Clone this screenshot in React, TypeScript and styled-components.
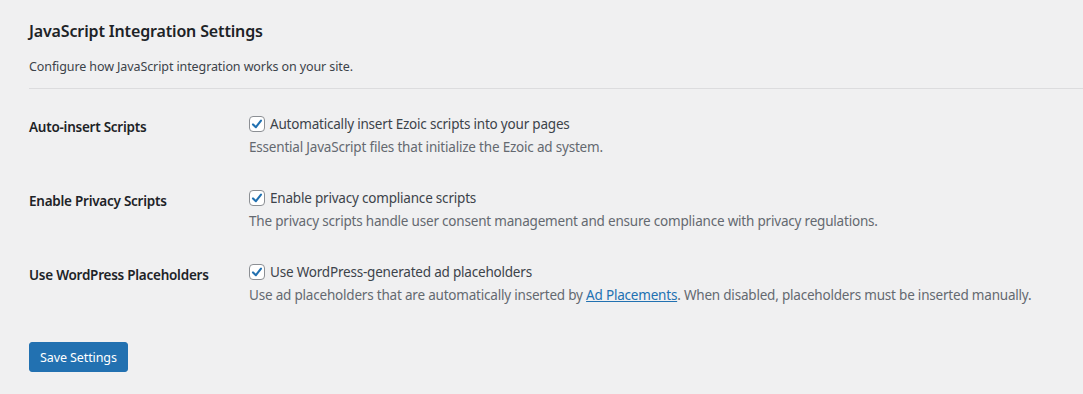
import React from "react";
import styled, { createGlobalStyle } from "styled-components";

const GlobalStyle = createGlobalStyle`
  body {
    margin: 0;
    background: #f0f0f1;
    font-family: "Noto Sans", "Open Sans", sans-serif;
    color: #3c434a;
  }
`;

interface Setting {
  id: string;
  title: string;
  label: string;
  description: React.ReactNode;
}

const settings: Setting[] = [
  {
    id: "auto-insert",
    title: "Auto-insert Scripts",
    label: "Automatically insert Ezoic scripts into your pages",
    description: "Essential JavaScript files that initialize the Ezoic ad system.",
  },
  {
    id: "privacy",
    title: "Enable Privacy Scripts",
    label: "Enable privacy compliance scripts",
    description:
      "The privacy scripts handle user consent management and ensure compliance with privacy regulations.",
  },
  {
    id: "placeholders",
    title: "Use WordPress Placeholders",
    label: "Use WordPress-generated ad placeholders",
    description: (
      <>
        Use ad placeholders that are automatically inserted by{" "}
        <a href="#">Ad Placements</a>. When disabled, placeholders must be
        inserted manually.
      </>
    ),
  },
];

// 체크 표시 아이콘
function CheckMark() {
  return (
    <svg width="14" height="14" viewBox="0 0 14 14">
      <path
        d="M3 7.4 L5.9 10.2 L11 3.6"
        fill="none"
        stroke="#2271b1"
        strokeWidth="2.1"
        strokeLinecap="round"
        strokeLinejoin="round"
      />
    </svg>
  );
}

export default function App() {
  return (
    <>
      <GlobalStyle />
      <Page>
        <Header>
          <Title>JavaScript Integration Settings</Title>
          <Intro>Configure how JavaScript integration works on your site.</Intro>
        </Header>
        <Divider />
        <Table>
          {settings.map((setting) => (
            <Row key={setting.id}>
              <RowTitle>{setting.title}</RowTitle>
              <Field>
                <CheckLabel>
                  <Box>
                    <CheckMark />
                  </Box>
                  {setting.label}
                </CheckLabel>
                <Description>{setting.description}</Description>
              </Field>
            </Row>
          ))}
        </Table>
        <SaveButton type="button">Save Settings</SaveButton>
      </Page>
    </>
  );
}

const Page = styled.div`
  padding: 20px 0 22px 29px;
`;

const Header = styled.div`
  display: flex;
  flex-direction: column;
`;

const Title = styled.h2`
  margin: 0;
  font-size: 16px;
  line-height: 22px;
  letter-spacing: -0.15px;
  font-weight: 600;
  color: #1d2327;
`;

const Intro = styled.p`
  margin: 15px 0 0;
  font-size: 12.5px;
  line-height: 20px;
  letter-spacing: -0.1px;
`;

const Divider = styled.hr`
  margin: 11px 0 0;
  border: 0;
  border-top: 1px solid #dcdcde;
`;

const Table = styled.div`
  display: flex;
  flex-direction: column;
`;

const Row = styled.div`
  display: grid;
  grid-template-columns: 220px 1fr;
  height: 74px;
`;

const RowTitle = styled.div`
  padding-top: 29px;
  font-size: 13.5px;
  line-height: 18px;
  letter-spacing: -0.25px;
  font-weight: 600;
  color: #1d2327;
`;

const Field = styled.div`
  display: flex;
  flex-direction: column;
  padding-top: 26px;
  font-size: 13.5px;
  line-height: 18px;
  letter-spacing: -0.2px;
`;

const CheckLabel = styled.label`
  display: flex;
  align-items: center;
  gap: 5px;
  color: #3c434a;
`;

const Box = styled.span`
  display: inline-flex;
  align-items: center;
  justify-content: center;
  box-sizing: border-box;
  width: 16px;
  height: 16px;
  border: 1px solid #8c8f94;
  border-radius: 4px;
  background: #fff;
`;

const Description = styled.p`
  margin: 5px 0 0;
  color: #646970;

  a {
    color: #2271b1;
    text-decoration: underline;
  }
`;

const SaveButton = styled.button`
  margin-top: 31px;
  height: 30px;
  padding: 0 10px;
  border: 1px solid #2271b1;
  border-radius: 3px;
  background: #2271b1;
  color: #fff;
  font-family: inherit;
  font-size: 12.5px;
  letter-spacing: -0.1px;
  cursor: pointer;
`;
